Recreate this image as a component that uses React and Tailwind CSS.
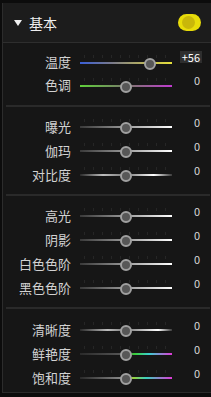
import React from 'react';

const font = { fontFamily: '"Noto Sans CJK SC", "Noto Sans", sans-serif' };

const grey = 'bg-[linear-gradient(to_right,#3a3a3a,#9a9a9a_50%,#ffffff)]';

const sections = [
  [
    { label: '温度', value: '+56', pos: 76, track: 'bg-[linear-gradient(to_right,#3a5fd8,#7a7a8a_35%,#a8a46a_60%,#e6e03a)]', boxed: true },
    { label: '色调', value: '0', pos: 50, track: 'bg-[linear-gradient(to_right,#5fd03a,#7a7a6a_50%,#c03ad0)]' },
  ],
  [
    { label: '曝光', value: '0', pos: 50, track: grey },
    { label: '伽玛', value: '0', pos: 50, track: grey },
    { label: '对比度', value: '0', pos: 50, track: 'bg-[linear-gradient(to_right,#2a2a2a,#bdbdbd_25%,#777_50%,#ffffff_80%,#3a3a3a)]' },
  ],
  [
    { label: '高光', value: '0', pos: 50, track: grey },
    { label: '阴影', value: '0', pos: 50, track: grey },
    { label: '白色色阶', value: '0', pos: 50, track: grey },
    { label: '黑色色阶', value: '0', pos: 50, track: grey },
  ],
  [
    { label: '清晰度', value: '0', pos: 50, track: 'bg-[linear-gradient(to_right,#2a2a2a,#bdbdbd_30%,#777_50%,#ffffff_85%,#3a3a3a)]' },
    { label: '鲜艳度', value: '0', pos: 50, track: 'bg-[linear-gradient(to_right,#2a2a2a,#555_45%,#3ad03a_60%,#3acfd0_75%,#e03ad8)]' },
    { label: '饱和度', value: '0', pos: 50, track: 'bg-[linear-gradient(to_right,#2a2a2a,#888_45%,#9ad03a_58%,#3ad0c0_72%,#e03ad8)]' },
  ],
];

const SliderRow = ({ label, value, pos, track, boxed, h }) => (
  <div className={`flex items-center ${h}`}>
    <div className="w-[69px] text-right text-[13px] leading-none text-[#d2d2d2] pr-[1px]">{label}</div>
    <div className="relative ml-[8px] w-[92px] h-[14px] flex flex-col justify-end pb-[5px]">
      {/* faint ticks */}
      <div className="absolute top-0 left-[4px] right-[4px] h-[3px] bg-[repeating-linear-gradient(to_right,#262626_0px,#262626_1px,transparent_1px,transparent_9px)]" />
      <div className={`w-full h-[2px] ${track}`} />
      <div
        className="absolute top-[9px] -translate-y-1/2 -translate-x-1/2 w-[12px] h-[12px] rounded-full bg-[#575757] border-2 border-[#a0a0a0]"
        style={{ left: `${pos}%` }}
      />
    </div>
    <div className="flex-1 flex justify-end pr-[9px] -mt-[9px]">
      {boxed ? (
        <span className="bg-[#2e2e2e] text-white text-[11px] leading-[12px] px-[2px]">{value}</span>
      ) : (
        <span className="text-[#d8d8d8] text-[11px] leading-[12px] pr-[2px]">{value}</span>
      )}
    </div>
  </div>
);

export default function App() {
  return (
    <div className="w-[211px] h-[397px] bg-[#0c0c0c] pt-[3px] pl-[2px] overflow-hidden" style={font}>
      <div className="h-[390px] border-l border-[#2c2c2c] bg-[#161616] border-b border-b-[#2a2a2a] flex flex-col">
        <div className="h-[40px] bg-[#1c1c1c] border-b border-[#2e2e2e] flex items-center pl-[11px] pr-[10px]">
          <svg width="8" height="6" viewBox="0 0 8 6" className="mr-[7px]">
            <polygon points="0,0 8,0 4,6" fill="#f0f0f0" />
          </svg>
          <span className="text-[14px] leading-none text-[#eeeeee]">基本</span>
          <div className="ml-auto w-[23px] h-[17px] rounded-full bg-[#e8dc0a] flex items-center justify-center">
            <div className="w-[13px] h-[13px] rounded-full bg-[#c9b70a] -ml-[2px]" />
          </div>
        </div>
        {sections.map((rows, i) => (
          <React.Fragment key={i}>
            <div className={i === 0 ? 'pt-[7px] pb-[9px]' : i === 3 ? 'pt-[8px]' : 'pt-[7px] pb-[8px]'}>
              {rows.map((r) => (
                <SliderRow key={r.label} {...r} h={i === 0 ? 'h-[23px]' : 'h-[24px]'} />
              ))}
            </div>
            {i < sections.length - 1 && <div className="ml-[3px] mr-[1px] h-[2px] bg-[#2a2a2a]" />}
          </React.Fragment>
        ))}
      </div>
    </div>
  );
}
